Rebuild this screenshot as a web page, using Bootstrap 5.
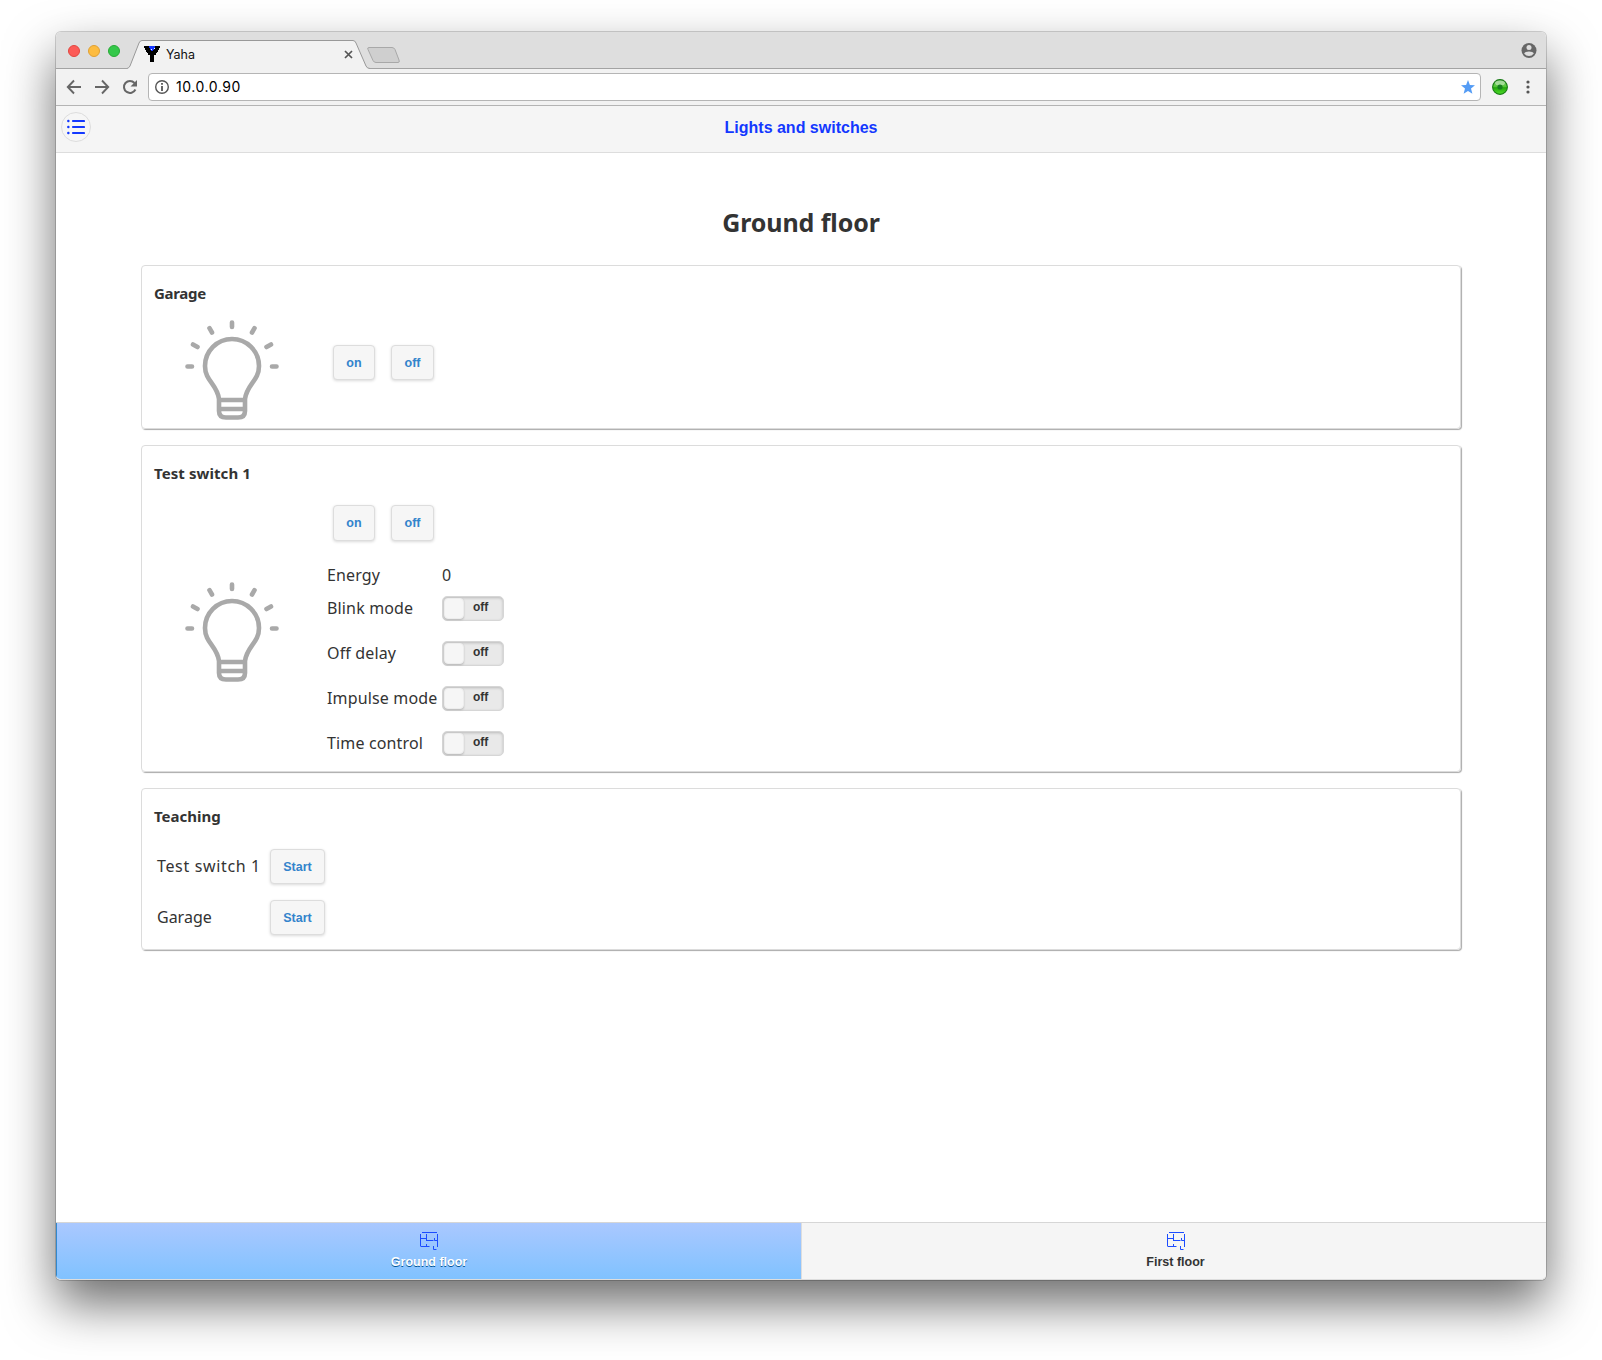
<!DOCTYPE html>
<html lang="en">
<head>
<meta charset="utf-8">
<meta name="viewport" content="width=device-width, initial-scale=1">
<title>Yaha</title>
<link href="https://cdn.jsdelivr.net/npm/bootstrap@5.3.0/dist/css/bootstrap.min.css" rel="stylesheet">
<style>
body{background:#fff;color:#333;font:16px/1.3 "Noto Sans","Open Sans",sans-serif;height:1360px;overflow:hidden;padding:32px 56px 0}
.browser-window{width:1490px;height:1248px;border-radius:5px;background:#fff;box-shadow:0 0 0 1px rgba(0,0,0,.17),0 24px 50px rgba(0,0,0,.58)}
.tab-strip{height:37px;background:#dedede;border-bottom:1px solid #a3a3a3;border-radius:5px 5px 0 0;padding-left:12px}
.lights{gap:8px;margin-right:7px;padding-top:2px}
.light{width:12px;height:12px;border-radius:50%}
.light-r{background:#fc5b57;border:1px solid #e2463f}
.light-y{background:#fdbc40;border:1px solid #e0a033}
.light-g{background:#34c84a;border:1px solid #27aa35}
.tab-shape{width:244px;height:29px;margin-bottom:-1px}
.tab-shape>svg{z-index:0}
.tab-label{z-index:1;font:12.5px/15px Inter,sans-serif;color:#111;padding:6px 18px 0 17px}
.tab-name{margin-left:6px}
.new-tab{margin:10px 0 0 -5px}
.toolbar{height:37px;background:#f2f2f2;border-bottom:1px solid #b4b4b4;padding:0 15px 1px 10px}
.address{height:28px;border:1px solid #b5b5b5;border-radius:4px;background:#fff;font:14px/26px Inter,sans-serif;color:#000;padding:0 5px 0 5px;margin:0 11px 0 10px}
.address-text{margin-left:6px;letter-spacing:.55px}
.app-header{height:47px;background:#f5f5f5;border-bottom:1px solid #ddd;padding:6px 5px 0}
.helv{font-family:"Liberation Sans",Arial,sans-serif;font-weight:700}
.menu-btn{width:30px;height:30px;border:1px solid #ddd;border-radius:50%;background:#f6f6f6}
.page-title{font-size:16px;line-height:21px;color:#1338ff;padding-top:5px;margin-left:-30px}
.app-body{padding:0 85px}
.floor-title{font-size:25px;line-height:34px;font-weight:700;margin:52px 0 26px;letter-spacing:-.1px}
.panel{border:1px solid #dcdcdc;border-radius:4px;box-shadow:1px 1px 1px #aaa;margin-bottom:16px;padding:0 12px;width:1320px}
.panel-name{font-size:15px;line-height:20px;font-weight:700;margin:0;padding-top:17px;height:47px}
.name-garage{letter-spacing:-.3px}
.name-switch{letter-spacing:.08px}
.bulb{width:94px;height:100px;margin-left:31px;margin-right:54px;flex:none}
.jq-btn{display:flex;align-items:center;justify-content:center;height:35px;background:#f6f6f6;border:1px solid #ddd;border-radius:4px;box-shadow:0 1px 3px rgba(0,0,0,.15);font-size:12.5px;line-height:16px;padding:0;color:#3384cc}
.w-on{width:42px}.w-off{width:43px}.w-start{width:55px}
.tall-btn{height:36px}
.props{padding-top:12px;margin-left:-6px}
.props-buttons{margin-left:6px}
.prop-name{width:115px;letter-spacing:.15px;white-space:nowrap}
.prop{height:45px;padding-top:11px;line-height:22px}
.flip{width:62px;height:25px;border:1px solid #d6d6d6;border-radius:5px;background:#e9e9e9;box-shadow:inset 0 1px 3px rgba(0,0,0,.2);padding:1px;font-size:12px;line-height:19px;margin-top:-1px}
.flip span{margin-left:9px}
.knob{width:20px;height:21px;border-radius:4px;background:#f6f6f6;border:1px solid #ededed;box-shadow:0 1px 2px rgba(0,0,0,.2)}
.teach{height:51px}
.teach span{width:113px;margin-right:3px;padding-left:3px}
.teach .teach-wide{letter-spacing:.65px}
.floor-tabs{height:58px;border-top:1px solid #d6d6d6;border-bottom:1px solid #ddd;border-radius:0 0 5px 5px;background:#f5f5f5;overflow:hidden}
.floor-tab{font-size:12.5px;line-height:16px;color:#333;padding-top:9px;gap:4px}
.floor-on{background:linear-gradient(#aac8ff,#80c2ff);border-left:1px solid #38c;color:#fff;text-shadow:0 1px 0 #059}
.floor-off{border-left:1px solid #ddd;padding-left:3px}
</style>
</head>
<body>
<svg class="d-none" aria-hidden="true">
<symbol id="bulb" viewBox="0 0 94 100"><g fill="none" stroke="#a9a9a9" stroke-width="4.600" stroke-linecap="round"><path d="M34 79C32 64 20 61 20 46a27 27 0 0 1 54 0c0 15-12 18-14 33M34 79v12q0 6.500 7 6.500h12q7 0 7-6.500V79M34 80h26M34 89h26"/><path d="M47 2.500v4.500M24.500 8.200l2.500 4.300M69.500 8.200L67 12.500M8 24.500l4.500 2.500M86 24.500L81.500 27M2.500 46.500H7M87 46.500h4.500"/></g></symbol>
<symbol id="plan" viewBox="0 0 18 18"><path d="M2 .5h15M.5 2v12M17.500 2v13M.5 6.500h6M6.500 2v7M6.500 8.500h7M14.500 6v2.500h3M.5 14.500h9M6.500 12v2M13.500 14v3.500h3" fill="none" stroke="#1c4dff"/></symbol>
</svg>
<div class="browser-window d-flex flex-column">
  <div class="tab-strip d-flex align-items-center">
    <div class="lights d-flex"><i class="light light-r"></i><i class="light light-y"></i><i class="light light-g"></i></div>
    <div class="tab-shape position-relative align-self-end">
      <svg class="position-absolute top-0 start-0" width="244" height="29"><path d="M0 28.500Q2 28 3 26L12 3Q13 .5 15 .5H226Q228 .5 229 3L239 26Q240 28.500 243 28.500V29H0Z" fill="#f2f2f2"/><path d="M0 28.500Q2 28 3 26L12 3Q13 .5 15 .5H226Q228 .5 229 3L239 26Q240 28.500 243 28.500" fill="none" stroke="#999"/></svg>
      <div class="tab-label position-relative d-flex align-items-center">
        <svg width="16" height="16" shape-rendering="crispEdges"><path d="M0 0h16v2h-1v2h-1v2h-1v1h-1v2h-2v7H6V9H4V7H3V6H2V4H1V2H0z" fill="#000"/><path d="M5 0h6v2h-1v2H9v1H7V4H6V2H5z" fill="#1537ff"/><path d="M7 3h1v1H7zM10 2h1v1h-1z" fill="#fff"/></svg>
        <span class="tab-name">Yaha</span>
        <svg class="ms-auto" width="9" height="9"><path d="M1 1l7 7M8 1L1 8" stroke="#555" stroke-width="1.700"/></svg>
      </div>
    </div>
    <svg class="new-tab" width="36" height="18"><path d="M3 1.500h23q2 0 3 2l4 10.500q1 2.500-1 2.500H10q-2 0-3-2L2 3.500q-1-2 1-2z" fill="#cfcfcf" stroke="#a8a8a8"/></svg>
    <svg class="ms-auto" style="margin-right:9px" width="16" height="16"><circle cx="8" cy="8.500" r="7.500" fill="#666"/><circle cx="8" cy="5.500" r="2.500" fill="#dedede"/><path d="M3.200 11.500C3.700 8.800 12.300 8.800 12.800 11.500Q11 14 8 14T3.200 11.500" fill="#dedede"/></svg>
  </div>
  <div class="toolbar d-flex align-items-center">
    <svg width="16" height="16"><path d="M15 8H2M8 1.500L1.800 8 8 14.500" fill="none" stroke="#666" stroke-width="1.900"/></svg>
    <svg class="me-1" width="16" height="16" style="margin-left:12px"><path d="M1 8h13M8 1.500L14.200 8 8 14.500" fill="none" stroke="#666" stroke-width="1.900"/></svg>
    <svg width="16" height="16" style="margin-left:8px"><path d="M13.400 10.500A6 6 0 1 1 12.500 4" fill="none" stroke="#666" stroke-width="2"/><path d="M15 1v6.500H8.500z" fill="#666"/></svg>
    <div class="address flex-grow-1 d-flex align-items-center">
      <svg width="16" height="16"><circle cx="8" cy="8" r="6.300" fill="none" stroke="#555" stroke-width="1.400"/><path d="M8 7v5M8 4v1.700" stroke="#555" stroke-width="1.800"/></svg>
      <span class="address-text">10.0.0.90</span>
      <svg class="ms-auto" width="14" height="14"><path d="M7 0l1.900 4.900 5.100.3-4 3.200 1.400 5.300L7 10.900 2.600 13.700 4 8.400 0 5.200l5.100-.3z" fill="#549cf5"/></svg>
    </div>
    <svg width="16" height="16"><defs><linearGradient id="gr" x2="0" y2="1"><stop stop-color="#55b148"/><stop offset=".45" stop-color="#5ccb40"/><stop offset=".55" stop-color="#25a80d"/><stop offset="1" stop-color="#4fe02a"/></linearGradient></defs><circle cx="8" cy="8" r="7.400" fill="url(#gr)" stroke="#197b16" stroke-width="1.100"/><ellipse cx="8" cy="4" rx="5" ry="2.500" fill="#fff" opacity=".45"/><circle cx="8" cy="8" r="2.600" fill="#18801f"/></svg>
    <svg width="6" height="16" style="margin-left:17px" fill="#555"><circle cx="3" cy="3" r="1.600"/><circle cx="3" cy="8" r="1.600"/><circle cx="3" cy="13" r="1.600"/></svg>
  </div>
  <header class="app-header d-flex">
    <button class="menu-btn btn p-0 d-flex align-items-center justify-content-center" aria-label="Menu"><svg width="18" height="16"><path d="M6 2h11M6 8h11M6 14h11" stroke="#1338ff" stroke-width="2.200" stroke-linecap="round"/><path d="M1.300 2h.1M1.300 8h.1M1.300 14h.1" stroke="#1338ff" stroke-width="2.400" stroke-linecap="round"/></svg></button>
    <div class="page-title helv flex-grow-1 text-center">Lights and switches</div>
  </header>
  <main class="app-body flex-grow-1">
    <h1 class="floor-title text-center">Ground floor</h1>
    <section class="panel" style="height:164px">
      <h2 class="panel-name name-garage">Garage</h2>
      <div class="d-flex" style="padding-top:7px">
        <svg class="bulb"><use href="#bulb"/></svg>
        <div class="d-flex gap-3" style="padding-top:25px"><button class="btn jq-btn w-on helv">on</button><button class="btn jq-btn w-off helv">off</button></div>
      </div>
    </section>
    <section class="panel" style="height:327px">
      <h2 class="panel-name name-switch">Test switch 1</h2>
      <div class="d-flex">
        <svg class="bulb" style="margin-top:89px"><use href="#bulb"/></svg>
        <div class="props">
          <div class="props-buttons d-flex gap-3"><button class="btn jq-btn tall-btn w-on helv">on</button><button class="btn jq-btn tall-btn w-off helv">off</button></div>
          <div class="d-flex" style="padding-top:23px;line-height:22px"><span class="prop-name">Energy</span><span>0</span></div>
          <div class="prop d-flex"><span class="prop-name">Blink mode</span><div class="flip helv d-flex"><i class="knob"></i><span>off</span></div></div>
          <div class="prop d-flex"><span class="prop-name">Off delay</span><div class="flip helv d-flex"><i class="knob"></i><span>off</span></div></div>
          <div class="prop d-flex"><span class="prop-name">Impulse mode</span><div class="flip helv d-flex"><i class="knob"></i><span>off</span></div></div>
          <div class="prop d-flex"><span class="prop-name">Time control</span><div class="flip helv d-flex"><i class="knob"></i><span>off</span></div></div>
        </div>
      </div>
    </section>
    <section class="panel" style="height:162px">
      <h2 class="panel-name">Teaching</h2>
      <div style="padding-top:5px">
        <div class="teach d-flex align-items-center"><span class="teach-wide">Test switch 1</span><button class="btn jq-btn w-start helv">Start</button></div>
        <div class="teach d-flex align-items-center"><span>Garage</span><button class="btn jq-btn w-start helv">Start</button></div>
      </div>
    </section>
  </main>
  <nav class="floor-tabs d-flex helv">
    <div class="floor-tab floor-on w-50 d-flex flex-column align-items-center"><svg width="18" height="18"><use href="#plan"/></svg><span>Ground floor</span></div>
    <div class="floor-tab floor-off w-50 d-flex flex-column align-items-center"><svg width="18" height="18"><use href="#plan"/></svg><span>First floor</span></div>
  </nav>
</div>
<script src="https://cdn.jsdelivr.net/npm/bootstrap@5.3.0/dist/js/bootstrap.bundle.min.js"></script>
</body>
</html>
